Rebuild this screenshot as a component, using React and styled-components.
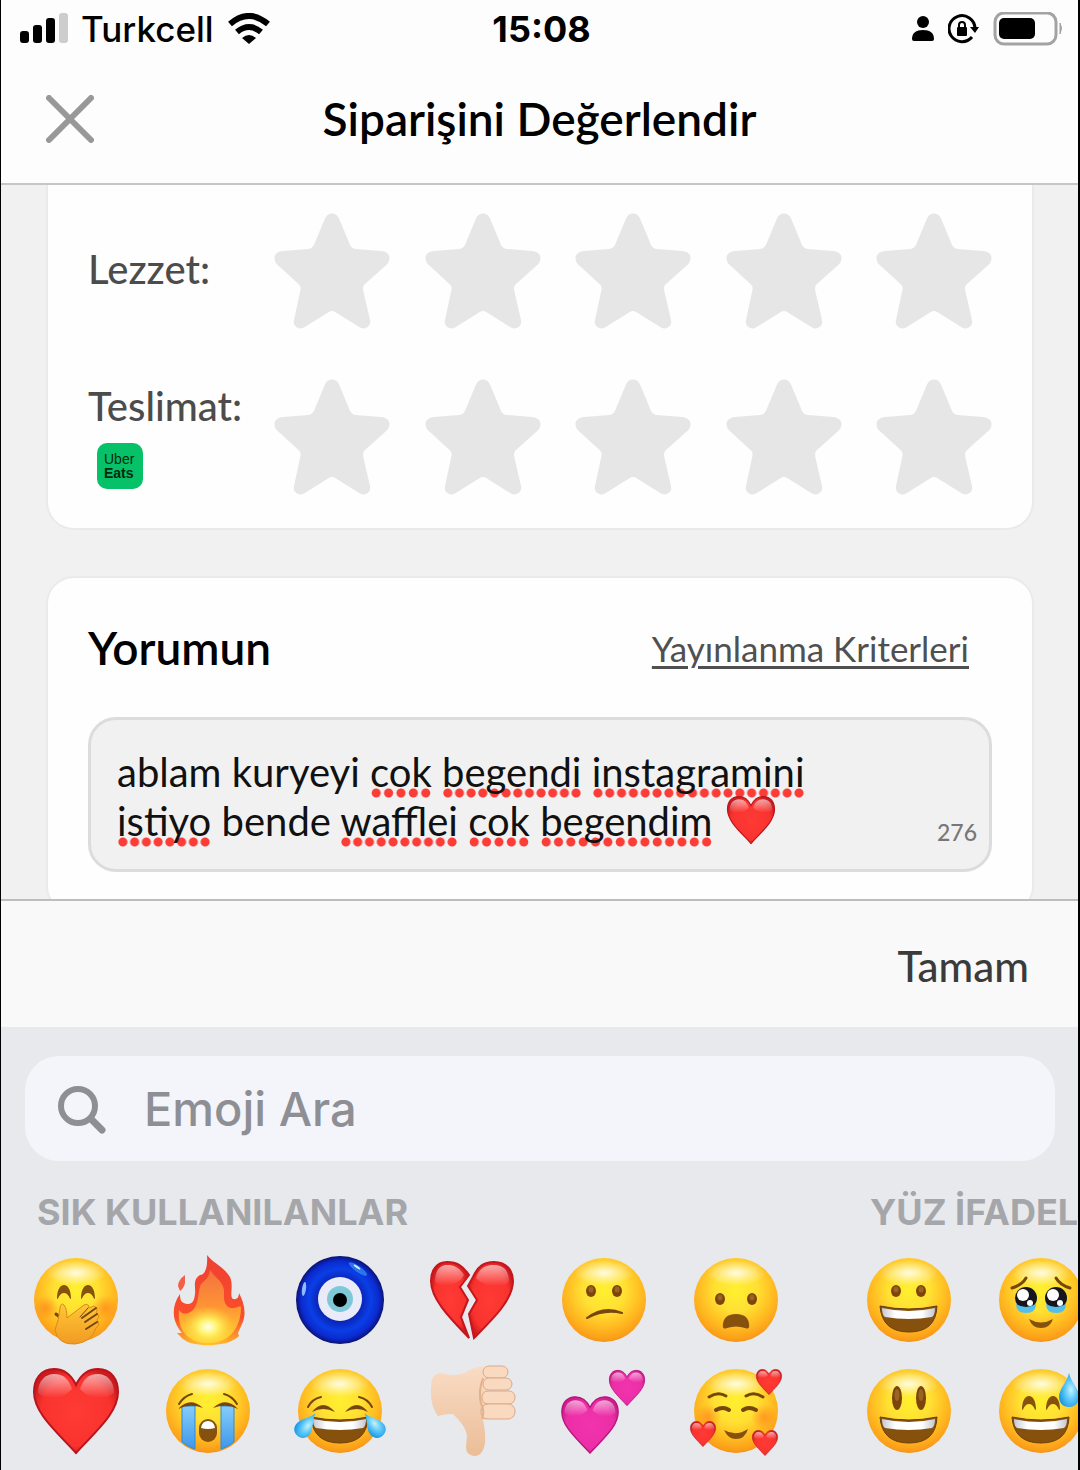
import React, { useState } from 'react';
import styled, { createGlobalStyle } from 'styled-components';

const GlobalStyle = createGlobalStyle`
    * {
        box-sizing: border-box;
    }
    body {
        margin: 0;
        background: #fdfdfd;
        --lato: Lato, "Liberation Sans", sans-serif;
        --inter: Inter, "Liberation Sans", sans-serif;
        font-family: var(--lato);
    }
    button, input, textarea {
        font: inherit;
        border: none;
        background: none;
        padding: 0;
        margin: 0;
    }
    button {
        cursor: pointer;
    }
    svg {
        display: block;
        flex: none;
    }
`

/* ---------- emoji drawings ---------- */

const HEART = 'M0,-26C-5,-37 -13,-42 -22,-42C-35,-42 -42,-32 -42,-19C-42,2 -20,20 0,42C20,20 42,2 42,-19C42,-32 35,-42 22,-42C13,-42 5,-37 0,-26Z'

const EmojiDefs = () => (
    <DefsSvg aria-hidden="true">
        <defs>
            <radialGradient id="face" cx="0.5" cy="0.38" r="0.64">
                <stop offset="0" stopColor="#fff02f" />
                <stop offset="0.4" stopColor="#ffe033" />
                <stop offset="0.72" stopColor="#ffb920" />
                <stop offset="0.92" stopColor="#fb9d18" />
                <stop offset="1" stopColor="#e88a1c" />
            </radialGradient>
            <radialGradient id="faceShine">
                <stop offset="0" stopColor="#fff" stopOpacity="0.85" />
                <stop offset="0.5" stopColor="#fff" stopOpacity="0.4" />
                <stop offset="1" stopColor="#fff" stopOpacity="0" />
            </radialGradient>
            <linearGradient id="shine" x1="0" y1="0" x2="0" y2="1">
                <stop offset="0" stopColor="#fff" stopOpacity="0.6" />
                <stop offset="1" stopColor="#fff" stopOpacity="0" />
            </linearGradient>
            <radialGradient id="blush">
                <stop offset="0" stopColor="#ff7a1c" stopOpacity="0.6" />
                <stop offset="1" stopColor="#ff7a1c" stopOpacity="0" />
            </radialGradient>
            <radialGradient id="red" cx="0.5" cy="0.5" r="0.55">
                <stop offset="0" stopColor="#ff3b35" />
                <stop offset="0.75" stopColor="#f9322e" />
                <stop offset="1" stopColor="#cc1a1e" />
            </radialGradient>
            <radialGradient id="pink" cx="0.5" cy="0.5" r="0.55">
                <stop offset="0" stopColor="#f133ae" />
                <stop offset="0.75" stopColor="#ec2ea6" />
                <stop offset="1" stopColor="#cf1d8c" />
            </radialGradient>
            <linearGradient id="tear" x1="0" y1="0" x2="0" y2="1">
                <stop offset="0" stopColor="#86cdfb" />
                <stop offset="1" stopColor="#3d97ea" />
            </linearGradient>
            <radialGradient id="drop" cx="0.6" cy="0.5" r="0.6">
                <stop offset="0" stopColor="#c4f1ff" />
                <stop offset="0.5" stopColor="#5cc8f8" />
                <stop offset="1" stopColor="#1c9ae6" />
            </radialGradient>
            <linearGradient id="teeth" x1="0" y1="0" x2="1" y2="0">
                <stop offset="0" stopColor="#c5c8d2" />
                <stop offset="0.25" stopColor="#fff" />
                <stop offset="0.75" stopColor="#fff" />
                <stop offset="1" stopColor="#c5c8d2" />
            </linearGradient>
            <linearGradient id="flame" x1="0" y1="0" x2="0" y2="1">
                <stop offset="0" stopColor="#ee3f32" />
                <stop offset="0.7" stopColor="#fa4f2b" />
                <stop offset="1" stopColor="#ffb52b" />
            </linearGradient>
            <linearGradient id="flameInner" x1="0" y1="0" x2="0" y2="1">
                <stop offset="0" stopColor="#f4713f" />
                <stop offset="0.5" stopColor="#ff9435" />
                <stop offset="1" stopColor="#ffd62f" />
            </linearGradient>
            <radialGradient id="glow">
                <stop offset="0" stopColor="#fffff0" />
                <stop offset="0.35" stopColor="#fff36a" />
                <stop offset="1" stopColor="#ffd22c" stopOpacity="0" />
            </radialGradient>
            <radialGradient id="bead" cx="0.5" cy="0.5" r="0.5">
                <stop offset="0.45" stopColor="#0a1fae" />
                <stop offset="0.7" stopColor="#0a3fe6" />
                <stop offset="0.88" stopColor="#0a2bd0" />
                <stop offset="1" stopColor="#0a1274" />
            </radialGradient>
            <linearGradient id="skin" x1="0" y1="0" x2="0" y2="1">
                <stop offset="0" stopColor="#f9dcc4" />
                <stop offset="1" stopColor="#ebbd98" />
            </linearGradient>
            <linearGradient id="palm" x1="0" y1="0" x2="0" y2="1">
                <stop offset="0" stopColor="#ffc735" />
                <stop offset="1" stopColor="#f29a24" />
            </linearGradient>
        </defs>
    </DefsSvg>
)

const Face = ({ children }) => (
    <>
        <circle r="42" fill="url(#face)" />
        <ellipse cy="-27" rx="30" ry="13" fill="url(#faceShine)" />
        {children}
    </>
)

const Heart = ({ x = 0, y = 0, scale = 1, fill = 'red', edge = '#b8141c' }) => (
    <g transform={`translate(${x} ${y}) scale(${scale})`}>
        <path d={HEART} fill={`url(#${fill})`} stroke={edge} strokeWidth="2" />
        <path d="M-38,-18C-38,-31 -30,-37 -22,-37C-12,-37 -7,-31 -4,-22C-12,-12 -30,-10 -38,-18Z" fill="url(#shine)" />
        <path d="M38,-18C38,-31 30,-37 22,-37C12,-37 7,-31 4,-22C12,-12 30,-10 38,-18Z" fill="url(#shine)" />
    </g>
)

const Eye = ({ x, y, rx = 5, ry = 6 }) => (
    <>
        <ellipse cx={x} cy={y} rx={rx} ry={ry} fill="#7d450c" />
        <ellipse cx={x} cy={y - ry / 4} rx={rx / 2} ry={ry / 2} fill="#9a6522" />
    </>
)

const HappyEye = ({ x }) => (
    <path transform={`translate(${x} 0)`} d="M-7,-1C-7,-10 -4,-15 0,-15C4,-15 7,-10 7,-1C5,-1 5,-7 0,-7C-5,-7 -5,-1 -7,-1Z" fill="#85530c" />
)

const Grin = () => (
    <>
        <path d="M-29,6Q0,12 28,6Q27,32 0,32Q-27,32 -29,6Z" fill="#86500d" />
        <path d="M-27,8Q0,14 26,8Q26,15 23,17Q0,21 -24,17Q-27,15 -27,8Z" fill="url(#teeth)" />
        <path d="M-29,6Q0,12 28,6Q27,32 0,32Q-27,32 -29,6Z" fill="none" stroke="#6b3d0a" strokeWidth="1" />
    </>
)

const Stroke = ({ d, width = 3 }) => (
    <path d={d} fill="none" stroke="#77460d" strokeWidth={width} strokeLinecap="round" />
)

const Droplet = ({ x, y, angle = 0, scale = 1 }) => (
    <path
        transform={`translate(${x} ${y}) rotate(${angle}) scale(${scale})`}
        d="M0,-22C2,-13 10,-6 10,2C10,8 6,12 0,12C-6,12 -10,8 -10,2C-10,-6 -2,-13 0,-22Z"
        fill="url(#drop)"
    />
)

const TearyEye = ({ x }) => (
    <g transform={`translate(${x} -2)`}>
        <circle r="11" fill="#17161f" />
        <path d="M-10,6Q0,12 10,6Q10,15 0,15Q-10,15 -10,6Z" fill="#56bfe9" />
        <circle cx="-3" cy="-3" r="6" fill="#fff" />
        <circle cx="4" cy="5" r="3" fill="#fff" />
    </g>
)

const DRAWINGS = {
    giggle: (
        <Face>
            <circle cx="-30" cy="8" r="12" fill="url(#blush)" />
            <circle cx="29" cy="8" r="13" fill="url(#blush)" />
            <HappyEye x={-12} />
            <HappyEye x={12} />
            <Stroke d="M-20,14L-15,18" />
            <path
                d="M-16,8Q-15,2 -12,5Q-9,9 -9,18L8,5Q13,3 13,8L18,6Q23,8 20,13Q25,15 21,20Q25,24 20,28Q16,42 -1,44Q-18,45 -21,30Q-17,20 -16,8Z"
                fill="url(#palm)" stroke="#d98a1c" strokeWidth="1"
            />
            <Stroke d="M4,17L12,8" width={1} />
            <Stroke d="M6,18L20,8" width={2} />
            <Stroke d="M9,22L21,14" width={2} />
            <Stroke d="M10,29L21,22" width={2} />
        </Face>
    ),
    fire: (
        <>
            <path d="M-23,-25Q-30,-20 -30,-14L-28,-9Q-24,-12 -23,-17Z" fill="#f2604a" />
            <path
                d="M-1,-45C5,-37 15,-34 22,-23C26,-14 21,-4 25,-1C30,0 31,-4 31,-7C36,3 39,13 34,24L30,33L31,36C24,43 12,45 0,45C-12,45 -23,43 -28,36L-31,33L-26,33C-35,23 -38,8 -28,-6C-28,0 -27,3 -21,4C-16,4 -14,2 -13,-6C-12,-12 -16,-20 -8,-25C-3,-25 0,-33 -1,-45Z"
                fill="url(#flame)"
            />
            <path
                d="M2,-30C7,-22 17,-18 16,-6C15,4 20,9 26,8C31,7 32,5 33,7C33,26 23,43 0,43C-20,43 -31,30 -29,10C-25,17 -15,13 -12,5C-9,-2 -10,-9 -7,-16C-3,-20 1,-22 2,-30Z"
                fill="url(#flameInner)"
            />
            <ellipse cx="0" cy="27" rx="27" ry="21" fill="url(#glow)" />
        </>
    ),
    nazar: (
        <>
            <circle r="44" fill="url(#bead)" />
            <ellipse cx="18" cy="-31" rx="11" ry="3" transform="rotate(35 18 -31)" fill="#3fa4f5" opacity="0.6" />
            <ellipse cx="17" cy="-33" rx="4" ry="1" transform="rotate(35 17 -33)" fill="#e6f4ff" />
            <ellipse cx="-36" cy="-11" rx="2" ry="7" transform="rotate(8 -36 -11)" fill="#8fbaff" />
            <circle cx="0" cy="-1" r="22" fill="#e9ecf8" />
            <circle cx="0" cy="-1" r="13" fill="#7fc8d8" />
            <circle r="7" fill="#000" />
        </>
    ),
    broken: (
        <>
            <path d="M-3,-25C-9,-34 -15,-38 -25,-38C-36,-38 -41,-29 -41,-19C-41,0 -20,20 -3,38L-11,17L-4,0L-12,-13Z" fill="url(#red)" stroke="#c4161c" strokeWidth="2" />
            <path d="M1,-23C6,-34 12,-38 22,-38C35,-38 41,-29 41,-19C41,0 20,20 2,38L-3,14L5,0L-4,-14Z" fill="url(#red)" stroke="#c4161c" strokeWidth="2" />
            <path d="M-37,-18C-37,-30 -32,-35 -25,-35C-16,-35 -12,-31 -8,-25C-14,-13 -31,-12 -37,-18Z" fill="url(#shine)" />
            <path d="M37,-18C37,-30 31,-35 22,-35C12,-35 7,-31 4,-22C13,-12 31,-12 37,-18Z" fill="url(#shine)" />
        </>
    ),
    confused: (
        <Face>
            <Eye x={-13} y={-9} />
            <Eye x={13} y={-9} />
            <path d="M-17,18Q0,5 18,13Q0,9 -17,18Z" fill="#77460d" stroke="#77460d" strokeWidth="2" strokeLinejoin="round" />
        </Face>
    ),
    frown: (
        <Face>
            <Eye x={-16} y={-1} />
            <Eye x={16} y={-1} />
            <path d="M-13,24Q-12,14 0,14Q12,14 13,24Q14,30 9,28Q0,25 -9,28Q-14,30 -13,24Z" fill="#86500d" />
        </Face>
    ),
    heart: <Heart />,
    sob: (
        <Face>
            <path d="M-26,-5H-13V38Q-20,36 -26,31Z" fill="url(#tear)" stroke="#3389d4" strokeWidth="1" />
            <path d="M26,-5H13V38Q20,36 26,31Z" fill="url(#tear)" stroke="#3389d4" strokeWidth="1" />
            <path d="M-30,-2Q-18,-15 -5,-3Q-18,-8 -30,-2Z" fill="#77460d" />
            <path d="M30,-2Q18,-15 5,-3Q18,-8 30,-2Z" fill="#77460d" />
            <Stroke d="M-29,-7Q-24,-15 -16,-17" width={2} />
            <Stroke d="M29,-7Q24,-15 16,-17" width={2} />
            <rect x="-9" y="8" width="18" height="23" rx="9" fill="#86500d" />
            <path d="M-7,17Q-6,10 0,10Q6,10 7,17Q0,19 -7,17Z" fill="#fff" />
        </Face>
    ),
    joy: (
        <Face>
            <Stroke d="M-32,-4Q-28,-12 -19,-14" width={2} />
            <Stroke d="M32,-4Q28,-12 19,-14" width={2} />
            <path d="M-28,1Q-17,-13 -5,1Q-17,-5 -28,1Z" fill="#77460d" />
            <path d="M28,1Q17,-13 5,1Q17,-5 28,1Z" fill="#77460d" />
            <Grin />
            <Droplet x={-36} y={17} angle={38} scale={0.85} />
            <Droplet x={36} y={17} angle={-38} scale={0.85} />
        </Face>
    ),
    thumbsDown: (
        <>
            <path
                d="M-40,-32Q-36,-40 -26,-37Q-14,-34 -4,-40Q5,-46 20,-44L16,8L11,9Q14,22 13,32Q11,45 2,45Q-6,44 -6,36L-5,24Q-7,14 -19,3Q-28,3 -34,5Q-44,-8 -40,-32Z"
                fill="url(#skin)"
            />
            <g fill="#f9dac1" stroke="#dba985" strokeWidth="1">
                <rect x="11" y="-45" width="25" height="12" rx="6" />
                <rect x="11" y="-33" width="29" height="12" rx="6" />
                <rect x="10" y="-20" width="33" height="13" rx="6" />
                <rect x="9" y="-7" width="34" height="15" rx="7" />
            </g>
            <path d="M10,8Q13,-1 9,-7Q6,-20 11,-33" fill="none" stroke="#e2b28e" strokeWidth="2" />
        </>
    ),
    twoHearts: (
        <>
            <Heart x={-14} y={14} scale={0.67} fill="pink" edge="#b5157e" />
            <Heart x={23} y={-23} scale={0.42} fill="pink" edge="#b5157e" />
        </>
    ),
    loved: (
        <Face>
            <circle cx="28" cy="6" r="13" fill="url(#blush)" />
            <circle cx="-28" cy="6" r="13" fill="url(#blush)" />
            <Stroke d="M-27,-14Q-18,-20 -10,-15" />
            <Stroke d="M27,-14Q18,-20 10,-15" />
            <Stroke d="M-20,-1Q-13,-5 -7,-1" width={4} />
            <Stroke d="M20,-1Q13,-5 7,-1" width={4} />
            <path d="M-12,19Q0,26 12,18Q9,28 0,28Q-8,28 -12,19Z" fill="#86500d" />
            <Heart x={33} y={-29} scale={0.3} />
            <Heart x={-33} y={23} scale={0.3} />
            <Heart x={29} y={32} scale={0.3} />
        </Face>
    ),
    grin: (
        <Face>
            <Eye x={-13} y={-9} />
            <Eye x={12} y={-9} />
            <Grin />
        </Face>
    ),
    teary: (
        <Face>
            <Stroke d="M-29,-12Q-19,-15 -15,-22" />
            <Stroke d="M29,-12Q19,-15 15,-22" />
            <TearyEye x={-15} />
            <TearyEye x={15} />
            <path d="M-12,19Q0,26 12,19Q9,28 0,28Q-9,28 -12,19Z" fill="#86500d" />
        </Face>
    ),
    bigGrin: (
        <Face>
            <Eye x={-12} y={-13} ry={12} />
            <Eye x={12} y={-13} ry={12} />
            <Grin />
        </Face>
    ),
    sweat: (
        <Face>
            <HappyEye x={-12} />
            <HappyEye x={12} />
            <Grin />
            <Droplet x={28} y={-16} />
        </Face>
    ),
}

const Emoji = ({ name, size = 100 }) => (
    <svg width={size} height={size} viewBox="-50 -50 100 100" aria-hidden="true">
        {DRAWINGS[name]}
    </svg>
)

/* ---------- icons ---------- */

const SignalIcon = () => (
    <svg width="48" height="32" viewBox="0 0 48 32">
        <rect x="0" y="18" width="9" height="12" rx="3" />
        <rect x="13" y="12" width="9" height="18" rx="3" />
        <rect x="26" y="5" width="9" height="25" rx="3" />
        <rect x="39" y="0" width="9" height="30" rx="3" fill="#cdcdcd" />
    </svg>
)

const WifiIcon = () => (
    <svg width="44" height="32" viewBox="0 0 44 32">
        <path d="M3,11Q22,-5 41,11" fill="none" stroke="#000" strokeWidth="6" />
        <path d="M10,19Q22,9 34,19" fill="none" stroke="#000" strokeWidth="6" />
        <path d="M15,25Q22,19 29,25L22,31Z" />
    </svg>
)

const PersonIcon = () => (
    <svg width="24" height="28" viewBox="0 0 24 28">
        <circle cx="12" cy="7" r="6" />
        <path d="M1,24C1,18 5,15 12,15C19,15 23,18 23,24Q23,26 21,26H3Q1,26 1,24Z" />
    </svg>
)

const RotationLockIcon = () => (
    <svg width="32" height="30" viewBox="0 0 32 30">
        <path d="M27,14A13,13 0 1 0 24,23" fill="none" stroke="#000" strokeWidth="3" />
        <path d="M22,13H31L27,19Z" />
        <rect x="9" y="13" width="10" height="9" rx="1" />
        <path d="M11,14V11Q11,8 14,8Q17,8 17,11V14" fill="none" stroke="#000" strokeWidth="2" />
    </svg>
)

const BatteryIcon = () => (
    <svg width="70" height="34" viewBox="0 0 70 34">
        <rect x="2" y="1" width="61" height="31" rx="9" fill="none" stroke="#a3a3a3" strokeWidth="3" />
        <rect x="6" y="6" width="36" height="21" rx="5" />
        <path d="M67,11Q70,16 67,22Z" fill="#a3a3a3" stroke="#a3a3a3" />
    </svg>
)

const CloseIcon = () => (
    <svg width="48" height="48" viewBox="0 0 48 48">
        <path d="M3,3L45,45M45,3L3,45" stroke="#989898" strokeWidth="6" strokeLinecap="round" />
    </svg>
)

const StarIcon = () => (
    <svg width="116" height="116" viewBox="0 0 116 116">
        <path
            d="M58,0.500C61,0.500 63.500,2 65,5.500L74,27C76,32 77,35.500 82,36L107,38C112,38.500 115.500,41 115.500,45C115.500,49 113.500,51 110,54L91,71C88.500,73.500 89,76 89.500,79L96,107C97.500,113 91.500,117.500 86,114.500L62,99.500C59,97.500 57,97.500 54,99.500L30,114.500C24.500,117.500 18.500,113 20,107L26,79C27,75 27,73.500 24.500,71L6,54C2.500,51 0.500,49 0.500,45C0.500,41 4,38.500 9,38L34,36C39,35.500 40,32 42,27L51,5.500C52.500,2 55,0.500 58,0.500Z"
            fill="#e6e6e6"
        />
    </svg>
)

const SearchIcon = () => (
    <svg width="50" height="50" viewBox="0 0 50 50">
        <circle cx="20" cy="22" r="17" fill="none" stroke="#8e8f94" strokeWidth="6" />
        <path d="M33,35L44,46" stroke="#8e8f94" strokeWidth="7" strokeLinecap="round" />
    </svg>
)

/* ---------- parts ---------- */

const Rating = ({ name, label, badge }) => (
    <RatingRow>
        <RatingLabel>
            <span id={name}>{label}</span>
            {badge}
        </RatingLabel>
        <Stars role="radiogroup" aria-labelledby={name}>
            {[1, 2, 3, 4, 5].map((value) => (
                <StarLabel key={value}>
                    <input type="radio" name={name} value={value} aria-label={`${label} ${value}`} />
                    <StarIcon />
                </StarLabel>
            ))}
        </Stars>
    </RatingRow>
)

// words the spell checker does not know
const MISSPELT = ['cok', 'begendi', 'instagramini', 'istiyo', 'wafflei', 'begendim']

const CommentBox = () => {
    const [text, setText] = useState('ablam kuryeyi cok begendi instagramini istiyo bende wafflei cok begendim')

    return (
        <CommentField>
            <Editor>
                <SpellMarks aria-hidden="true">
                    {text.split(/(\s+)/).map((word, i) => (
                        MISSPELT.includes(word) ? <mark key={i}>{word}</mark> : word
                    ))}
                    <span className="heart"><Emoji name="heart" size={56} /></span>
                </SpellMarks>
                <textarea
                    aria-label="Yorumun"
                    rows={2}
                    spellCheck={false}
                    value={text}
                    onChange={(e) => setText(e.target.value)}
                />
            </Editor>
            <Counter>276</Counter>
        </CommentField>
    )
}

const EmojiGroup = ({ title, emojis }) => (
    <Group>
        <h3>{title}</h3>
        <EmojiGrid>
            {emojis.map((name) => (
                <button type="button" key={name} aria-label={name}>
                    <Emoji name={name} />
                </button>
            ))}
        </EmojiGrid>
    </Group>
)

// listed column by column, two rows each
const FREQUENT = ['giggle', 'heart', 'fire', 'sob', 'nazar', 'joy', 'broken', 'thumbsDown', 'confused', 'twoHearts', 'frown', 'loved']
const FACES = ['grin', 'bigGrin', 'teary', 'sweat']

const App = () => {
    return (
        <Screen>
            <GlobalStyle />
            <EmojiDefs />
            <StatusBar>
                <div className="carrier">
                    <SignalIcon />
                    <span>Turkcell</span>
                    <WifiIcon />
                </div>
                <time>15:08</time>
                <div className="system">
                    <PersonIcon />
                    <RotationLockIcon />
                    <BatteryIcon />
                </div>
            </StatusBar>
            <Header>
                <button type="button" aria-label="Kapat"><CloseIcon /></button>
                <h1>Siparişini Değerlendir</h1>
            </Header>
            <Content>
                <RatingCard>
                    <Rating name="taste" label="Lezzet:" />
                    <Rating
                        name="delivery"
                        label="Teslimat:"
                        badge={<UberBadge><span>Uber</span><b>Eats</b></UberBadge>}
                    />
                </RatingCard>
                <CommentCard>
                    <CommentHead>
                        <h2>Yorumun</h2>
                        <a href="#kriterler">Yayınlanma Kriterleri</a>
                    </CommentHead>
                    <CommentBox />
                </CommentCard>
            </Content>
            <Accessory>
                <button type="button">Tamam</button>
            </Accessory>
            <Keyboard>
                <Search>
                    <SearchIcon />
                    <input type="search" aria-label="Emoji Ara" placeholder="Emoji Ara" />
                </Search>
                <EmojiGroups>
                    <EmojiGroup title="SIK KULLANILANLAR" emojis={FREQUENT} />
                    <EmojiGroup title="YÜZ İFADEL" emojis={FACES} />
                </EmojiGroups>
            </Keyboard>
        </Screen>
    )
}

const DefsSvg = styled.svg`
    position: absolute;
    width: 0;
    height: 0;
`

const Screen = styled.div`
    display: flex;
    flex-direction: column;
    height: 100vh;
    overflow: hidden;
    border-left: solid 1px #000;
    border-right: solid 2px #000;
    background: #fdfdfd;
`

const StatusBar = styled.div`
    display: grid;
    grid-template-columns: 1fr auto 1fr;
    align-items: center;
    flex: none;
    height: 58px;
    padding: 0 15px 0 19px;
    font-family: var(--inter);
    font-size: 35px;
    line-height: 40px;
    color: #000;
    .carrier, .system {
        display: flex;
        align-items: center;
        gap: 13px;
    }
    .carrier {
        font-weight: 500;
    }
    .system {
        justify-content: flex-end;
    }
    time {
        font-size: 36px;
        font-weight: 700;
    }
`

const Header = styled.header`
    display: grid;
    grid-template-columns: 48px 1fr 48px;
    align-items: center;
    flex: none;
    height: 127px;
    padding: 0 45px 4px;
    border-bottom: solid 2px #c6c6c6;
    h1 {
        margin: 0;
        text-align: center;
        font-size: 46px;
        line-height: 56px;
        font-weight: 600;
        color: #000;
    }
`

const Content = styled.main`
    display: flex;
    flex-direction: column;
    gap: 46px;
    flex: 1;
    min-height: 0;
    overflow: hidden;
    padding: 0 44px 0 45px;
    background: #f1f1f1;
`

const Card = styled.section`
    flex: none;
    padding: 0 40px;
    border: solid 2px #eaeaea;
    border-radius: 28px;
    background: #fefefe;
`

const RatingCard = styled(Card)`
    display: flex;
    flex-direction: column;
    gap: 50px;
    padding-top: 28px;
    padding-bottom: 33px;
    border-top: none;
    border-top-left-radius: 0;
    border-top-right-radius: 0;
`

const RatingRow = styled.div`
    display: flex;
    align-items: center;
    height: 116px;
`

const RatingLabel = styled.div`
    display: flex;
    flex-direction: column;
    flex: none;
    gap: 13px;
    width: 186px;
    padding-bottom: 4px;
    font-size: 40px;
    line-height: 48px;
    font-weight: 500;
    color: #4c4c4c;
`

const Stars = styled.div`
    display: flex;
    justify-content: space-between;
    flex: 1;
`

const StarLabel = styled.label`
    position: relative;
    cursor: pointer;
    input {
        position: absolute;
        inset: 0;
        appearance: none;
    }
`

const UberBadge = styled.div`
    display: flex;
    flex-direction: column;
    justify-content: center;
    width: 46px;
    height: 46px;
    margin-left: 9px;
    padding-left: 7px;
    border-radius: 10px;
    background: #06c167;
    font-family: "Liberation Sans", sans-serif;
    font-size: 14px;
    line-height: 14px;
    color: #05290f;
    b {
        font-weight: 700;
    }
`

const CommentCard = styled(Card)`
    padding-top: 42px;
    padding-bottom: 40px;
`

const CommentHead = styled.div`
    display: flex;
    justify-content: space-between;
    align-items: center;
    padding-right: 23px;
    margin-bottom: 41px;
    h2 {
        margin: 0;
        font-size: 46px;
        line-height: 56px;
        font-weight: 600;
        color: #000;
    }
    a {
        font-size: 35px;
        line-height: 42px;
        color: #505050;
        text-decoration: underline;
        text-decoration-thickness: 3px;
        text-underline-offset: 4px;
    }
`

const CommentField = styled.div`
    display: flex;
    align-items: flex-end;
    gap: 56px;
    padding: 28px 12px 23px 26px;
    border: solid 3px #dcdcdc;
    border-radius: 28px;
    background: #f1f1f1;
`

const Editor = styled.div`
    display: grid;
    flex: 1;
    font-size: 40px;
    line-height: 49px;
    textarea {
        grid-area: 1 / 1;
        display: block;
        width: 100%;
        height: 98px;
        overflow: hidden;
        resize: none;
        outline: none;
        color: #111;
        z-index: 1;
    }
`

const SpellMarks = styled.div`
    grid-area: 1 / 1;
    height: 98px;
    white-space: pre-wrap;
    color: transparent;
    mark {
        color: transparent;
        padding-bottom: 2px;
        background: radial-gradient(circle, #fb3c37 4px, transparent 5px) left bottom / 12px 10px;
        background-repeat: round no-repeat;
    }
    .heart {
        display: inline-flex;
        align-items: center;
        height: 46px;
        margin-left: 10px;
        vertical-align: top;
    }
`

const Counter = styled.span`
    font-size: 23px;
    line-height: 28px;
    font-weight: 500;
    color: #777;
`

const Accessory = styled.div`
    display: flex;
    justify-content: flex-end;
    align-items: center;
    flex: none;
    height: 128px;
    padding: 4px 49px 0;
    border-top: solid 2px #bdbdbd;
    background: #f9f9f9;
    button {
        font-size: 42px;
        line-height: 50px;
        font-weight: 500;
        color: #3b3b3b;
    }
`

const Keyboard = styled.section`
    flex: none;
    padding-top: 29px;
    background: #e8e9ed;
    overflow: hidden;
`

const Search = styled.label`
    display: flex;
    align-items: center;
    gap: 36px;
    height: 105px;
    margin: 0 23px 0 24px;
    padding: 0 33px;
    border-radius: 34px;
    background: #f4f5fa;
    input {
        flex: 1;
        min-width: 0;
        font-family: var(--inter);
        font-size: 47px;
        line-height: 56px;
        font-weight: 500;
        outline: none;
        &::placeholder {
            color: #8e8f94;
            opacity: 1;
        }
    }
`

const EmojiGroups = styled.div`
    display: flex;
    gap: 41px;
    padding: 31px 0 4px 9px;
    overflow: hidden;
`

const Group = styled.div`
    flex: none;
    h3 {
        margin: 0 0 12px 27px;
        font-family: var(--inter);
        font-size: 36px;
        line-height: 40px;
        font-weight: 700;
        color: #a5a6aa;
        white-space: nowrap;
    }
`

const EmojiGrid = styled.div`
    display: grid;
    grid-auto-flow: column;
    grid-template-rows: repeat(2, 111px);
    grid-auto-columns: 132px;
    justify-items: center;
    align-items: center;
`

export default App
